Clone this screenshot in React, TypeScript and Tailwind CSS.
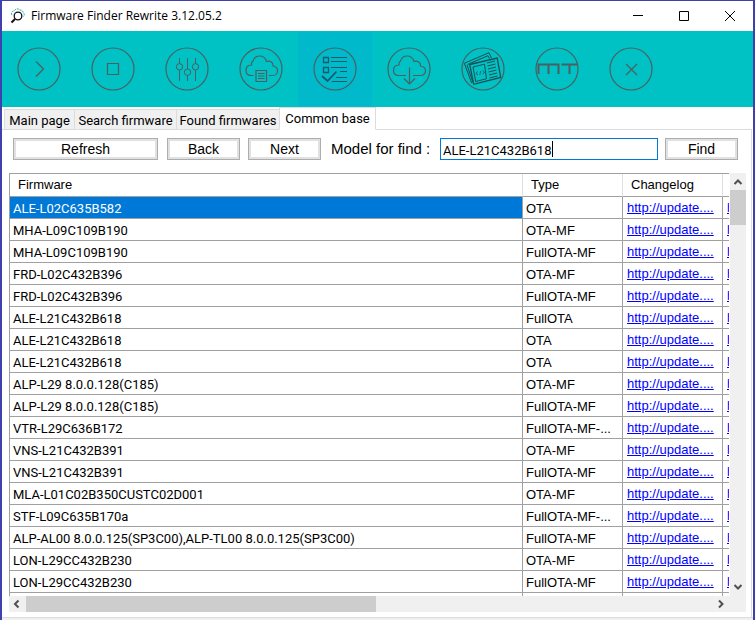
import { useState } from "react";
import type { ReactNode } from "react";

const tabs = [
    { label: "Main page", width: "w-[70px]" },
    { label: "Search firmware", width: "w-[102px]" },
    { label: "Found firmwares", width: "w-[103px]" },
    { label: "Common base", width: "w-[97px]" },
];

const rows = [
    ["ALE-L02C635B582", "OTA"],
    ["MHA-L09C109B190", "OTA-MF"],
    ["MHA-L09C109B190", "FullOTA-MF"],
    ["FRD-L02C432B396", "OTA-MF"],
    ["FRD-L02C432B396", "FullOTA-MF"],
    ["ALE-L21C432B618", "FullOTA"],
    ["ALE-L21C432B618", "OTA"],
    ["ALE-L21C432B618", "OTA"],
    ["ALP-L29 8.0.0.128(C185)", "OTA-MF"],
    ["ALP-L29 8.0.0.128(C185)", "FullOTA-MF"],
    ["VTR-L29C636B172", "FullOTA-MF-..."],
    ["VNS-L21C432B391", "OTA-MF"],
    ["VNS-L21C432B391", "FullOTA-MF"],
    ["MLA-L01C02B350CUSTC02D001", "OTA-MF"],
    ["STF-L09C635B170a", "FullOTA-MF-..."],
    ["ALP-AL00 8.0.0.125(SP3C00),ALP-TL00 8.0.0.125(SP3C00)", "FullOTA-MF"],
    ["LON-L29CC432B230", "OTA-MF"],
    ["LON-L29CC432B230", "FullOTA-MF"],
];

// Every tool icon is drawn on a 44x44 grid, inside the ring
const tools: { name: string; icon: ReactNode }[] = [
    { name: "Start", icon: <path d="m19 14.5 7.5 7.5-7.5 7.5" strokeWidth="1.2" /> },
    { name: "Stop", icon: <path d="M16.5 16.5h11v11h-11z" strokeWidth="1.2" /> },
    {
        name: "Settings",
        icon: (
            <>
                <path d="M14.5 11v5.5M14.5 23v11M22.5 11v11M22.5 28.5V34M30.5 11v5.5M30.5 23v11" />
                <circle cx="14.5" cy="19.8" r="3.2" />
                <circle cx="22.5" cy="25.2" r="3.2" />
                <circle cx="30.5" cy="19.8" r="3.2" />
            </>
        ),
    },
    {
        name: "Cloud list",
        icon: (
            <g strokeWidth="1.2">
                <path d="M14.5 28.5H12c-3 0-5-2-5-5 0-3.5 2-5.5 5.5-5.5 0-1.5-.5-3 1.5-4 1-3 3-5 6.5-5s6 2 7 5.5c3.5-1 7 1 6.5 4.500 3 .5 4.500 2.500 4.500 5s-2 4.500-4.500 4.500h-4" />
                <path d="M17 23.5h10.5v11H17zM19 26.5h6.5M19 29h6.5M19 31.5h6.5" />
            </g>
        ),
    },
    {
        name: "Common base",
        icon: (
            <g stroke="#155a66">
                <path d="M10.5 10.5h5v5h-5zM10.5 20.5h5v5h-5z" strokeWidth="1.3" />
                <path d="M18 10.5h16M18 14.5h16M18 20.5h16M27 24.5h7M23 30.5h11M19 34.5h15" strokeWidth="1.2" />
                <path d="m9 29 5.5 5 9-9.5" strokeWidth="1.8" />
            </g>
        ),
    },
    {
        name: "Download",
        icon: (
            <g strokeWidth="1.2">
                <path d="M19 28.5h-7.5c-3 0-5-2-5-5 0-3.5 2-5.5 5.5-5.5 0-1.5-.5-3 1.5-4 1-3 3-5 6.5-5s6 2 7 5.5c3.500-1 7 1 6.500 4.500 3 .5 5 2.500 5 5s-2.500 4.500-5 4.500H26" />
                <path d="M22.5 20.5V37M17 31.5l5.5 5.5 5.5-5.5" />
            </g>
        ),
    },
    {
        name: "News",
        icon: (
            <g stroke="#164f53">
                <path d="M10.700 36 3.300 16.300 28 5.700l2.500 5.500M6.500 17.500 27 8.700l1.500 3M12 35.500 6 18" />
                <path d="m8.700 17.500 27.500-6.500 3.500 19.500-27 6.800z" strokeWidth="1.300" />
                <path d="m12 20 11.500-2.800 2 14.500-10.800 2.800z" />
                <path d="m16.500 24.500-1.500 2 2 1.500M21.500 23.500l2 1.500-1.500 2.200M19.700 24l-.9 4" strokeWidth=".8" />
                <path d="m26 16 8-2M26.500 19l8-2M27 22l8-2M27.500 25l8-2M28 28l8-2M28.500 31l8-2" />
            </g>
        ),
    },
    {
        name: "MT",
        icon: (
            <path d="M3.500 27V17.500h20V27M13.500 17.500V27M26.500 17.500h16M34.500 17.500V27" strokeWidth="2" />
        ),
    },
    { name: "Close", icon: <path d="m17 17 11 11M28 17 17 28" strokeWidth="1.2" /> },
];

const PushButton = ({ label, className }: { label: string; className: string }) => (
    <button
        className={`h-[22px] shrink-0 border border-[#adadad] bg-white font-[Liberation_Sans] text-[14px] leading-4 shadow-[inset_0_0_0_2px_#e1e1e1] ${className}`}
    >
        {label}
    </button>
);

const TitleBar = () => (
    <header className="flex h-[30px] shrink-0 items-center bg-white pl-2 text-black">
        <svg width="16" height="16" viewBox="0 0 16 16" fill="none" className="shrink-0">
            <path d="M2 7C.5 5 2 3 4 3c1-2 4-3 6-1 2 0 3 1 3 2.5C15 6 14.5 8 13 8.5" stroke="#28a9b0" strokeDasharray="2 1" />
            <circle cx="8" cy="8" r="3.8" stroke="#111" strokeWidth="1.3" />
            <path d="m5 11-3.5 3.5" stroke="#111" strokeWidth="2" />
        </svg>
        <h1 className="ml-[5px] flex-1 truncate font-[Open_Sans] text-xs">Firmware Finder Rewrite 3.12.05.2</h1>
        <button aria-label="Minimize" className="flex h-full w-[46px] items-center justify-center">
            <svg width="10" height="10" stroke="currentColor"><path d="M0 4.5h10" /></svg>
        </button>
        <button aria-label="Maximize" className="flex h-full w-[46px] items-center justify-center">
            <svg width="10" height="10" stroke="currentColor" fill="none"><path d="M.5.5h9v9h-9z" /></svg>
        </button>
        <button aria-label="Close" className="flex h-full w-[46px] items-center justify-center">
            <svg width="10" height="10" stroke="currentColor"><path d="m0 0 10 10M10 0 0 10" /></svg>
        </button>
    </header>
);

const Toolbar = () => (
    <nav className="flex h-[76px] shrink-0 items-center bg-[#00c1c3]">
        {tools.map((tool) => (
            <button
                key={tool.name}
                aria-label={tool.name}
                className={`flex h-[74px] w-[74px] shrink-0 items-center justify-center ${tool.name === "Common base" ? "bg-[#00b9cb]" : ""}`}
            >
                <svg width="44" height="44" viewBox="0 0 44 44" fill="none" stroke="#4c5f61">
                    <circle cx="22" cy="22" r="21" strokeWidth="1.2" />
                    {tool.icon}
                </svg>
            </button>
        ))}
    </nav>
);

const Arrow = ({ d }: { d: string }) => (
    <svg width="10" height="10" viewBox="0 0 10 10" fill="none" stroke="#505050" strokeWidth="2" className="shrink-0">
        <path d={d} />
    </svg>
);

const FirmwareTable = () => {
    const [selected, setSelected] = useState(0);
    const cell = "h-[22px] overflow-hidden border-r border-b border-[#a0a0a0] whitespace-nowrap p-0 pl-[3px]";
    const head = "h-[23px] overflow-hidden border-r border-b border-r-[#e0e0e0] border-b-[#a0a0a0] p-0 pl-2 text-left font-normal";

    return (
        <div className="mr-px min-w-0 flex-1 overflow-hidden border-t border-l border-[#a0a0a0]">
            <table className="w-full table-fixed border-separate border-spacing-0 text-[13px] leading-4">
                <colgroup>
                    <col />
                    <col className="w-[100px]" />
                    <col className="w-[100px]" />
                    <col className="w-1.5" />
                </colgroup>
                <thead>
                    <tr>
                        <th className={head}>Firmware</th>
                        <th className={head}>Type</th>
                        <th className={head}>Changelog</th>
                        <th className="border-b border-[#a0a0a0] p-0" />
                    </tr>
                </thead>
                <tbody>
                    {rows.map(([firmware, type], i) => (
                        <tr key={i} onClick={() => setSelected(i)}>
                            <td className={`${cell} pt-0.5 font-[Roboto] ${i === selected ? "bg-[#0078d7] text-white" : ""}`}>{firmware}</td>
                            <td className={`${cell} pt-0.5`}>{type}</td>
                            <td className={cell}>
                                <a href="#changelog" className="pl-px text-[#0000ff] underline">http://update....</a>
                            </td>
                            <td className="overflow-hidden border-b border-[#a0a0a0] p-0 pl-1 whitespace-nowrap">
                                <a href="#filelist" className="text-[#0000ff] underline">h</a>
                            </td>
                        </tr>
                    ))}
                    <tr>
                        <td className="h-[22px] border-r border-[#a0a0a0]" />
                        <td className="border-r border-[#a0a0a0]" />
                        <td className="border-r border-[#a0a0a0]" />
                        <td />
                    </tr>
                </tbody>
            </table>
        </div>
    );
};

export default function App() {
    const [tab, setTab] = useState("Common base");
    const [model, setModel] = useState("ALE-L21C432B618");

    return (
        <div className="flex h-screen flex-col overflow-hidden border-x-2 border-t border-[#3f3fae] bg-white font-[Liberation_Sans] text-black">
            <TitleBar />
            <Toolbar />

            {/* Tab strip, the open tab rises over the line */}
            <div className="mr-px flex h-[23px] shrink-0 items-end border-b border-[#dcdcdc] pl-0.5">
                {tabs.map(({ label, width }) => (
                    <button
                        key={label}
                        onClick={() => setTab(label)}
                        className={`-mb-px shrink-0 border border-[#dcdcdc] font-[Roboto] text-[13px] leading-4 whitespace-nowrap ${width} ${tab === label ? "h-[23px] border-b-white bg-white" : "h-[21px] border-r-0 bg-[#f0f0f0] pt-0.5"}`}
                    >
                        {label}
                    </button>
                ))}
            </div>

            <main className="mr-px flex min-h-0 flex-1 flex-col border-r border-[#dcdcdc] pr-[5px] pl-[7px]">
                <div className="flex shrink-0 items-center pt-2 pr-2 pl-1">
                    <PushButton label="Refresh" className="w-[145px]" />
                    <PushButton label="Back" className="ml-[9px] w-[73px]" />
                    <PushButton label="Next" className="ml-2 w-[73px]" />
                    <label htmlFor="model" className="ml-2.5 w-[109px] shrink-0 text-[15px] leading-5 whitespace-nowrap">
                        Model for find :
                    </label>
                    <div className="relative min-w-0 flex-1">
                        <input
                            id="model"
                            value={model}
                            onChange={(e) => setModel(e.target.value)}
                            className="block h-[22px] w-full border border-[#0078d7] pt-0.5 pl-0.5 font-[Roboto] text-[13px] outline-none"
                        />
                        <span className="absolute top-[3px] left-28 h-4 w-px bg-black" />
                    </div>
                    <PushButton label="Find" className="ml-[7px] w-[73px]" />
                </div>

                <div className="mt-[13px] flex min-h-0 flex-1">
                    <FirmwareTable />
                    <div className="flex w-4 shrink-0 flex-col items-center bg-[#f0f0f0] pt-1 pb-1">
                        <Arrow d="M1.5 7 5 3.5 8.5 7" />
                        <div className="mt-[3px] h-[35px] w-full bg-[#cdcdcd]" />
                        <div className="flex-1" />
                        <Arrow d="M1.5 3 5 6.5 8.5 3" />
                    </div>
                </div>
                <div className="mb-[5px] flex h-4 shrink-0 items-center bg-[#f0f0f0] pr-5 pl-[3px]">
                    <Arrow d="M6.5 1.5 3 5l3.5 3.5" />
                    <div className="ml-1 h-full w-[49%] bg-[#cdcdcd]" />
                    <div className="flex-1" />
                    <Arrow d="M3 1.5 6.5 5 3 8.5" />
                </div>
            </main>
            <footer className="h-[3px] shrink-0 border-t border-[#dcdcdc] bg-[#f0f0f0]" />
        </div>
    );
}
